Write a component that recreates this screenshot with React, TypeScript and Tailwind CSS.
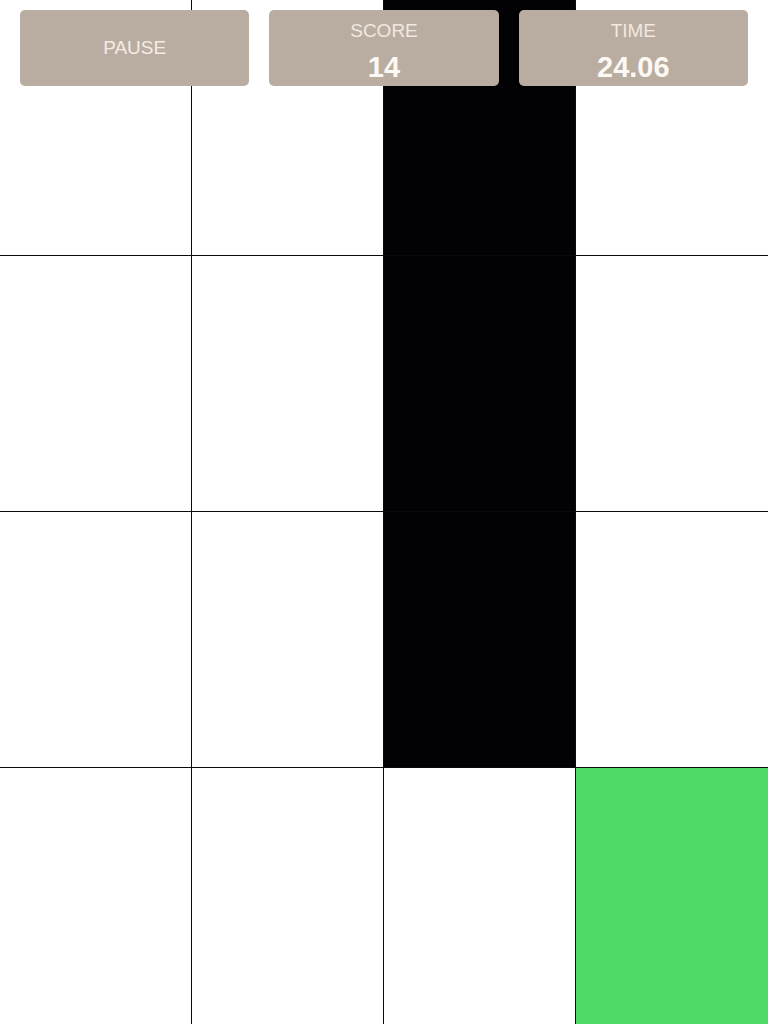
import React from 'react';

// 0 = white, 1 = black tile, 2 = tapped (green)
const rows: number[][] = [
    [0, 0, 1, 0],
    [0, 0, 1, 0],
    [0, 0, 1, 0],
    [0, 0, 0, 2],
];

function Tile({ kind, lastCol, lastRow }: { kind: number; lastCol: boolean; lastRow: boolean }) {
    const bg = kind === 1 ? 'bg-[#020103]' : kind === 2 ? 'bg-[#4fd966]' : 'bg-white';
    return (
        <div
            className={`h-[256px] border-[#0a0a0a] ${bg} ${lastCol ? '' : 'border-r'} ${lastRow ? '' : 'border-b'}`}
        />
    );
}

export default function App() {
    return (
        <div className="relative w-[768px] h-[1024px] overflow-hidden bg-white" style={{ fontFamily: '"Liberation Sans", Arial, sans-serif' }}>
            <div className="grid grid-cols-4">
                {rows.map((row, r) =>
                    row.map((kind, c) => (
                        <Tile key={`${r}-${c}`} kind={kind} lastCol={c === 3} lastRow={r === 3} />
                    ))
                )}
            </div>

            {/* HUD */}
            <div className="absolute top-[10px] left-0 right-0 flex gap-5 px-5">
                <button className="flex-1 h-[76px] rounded-[5px] bg-[#b9ada1] text-[#f4ece3] text-[19px] flex items-center justify-center">
                    PAUSE
                </button>
                <div className="flex-1 h-[76px] rounded-[5px] bg-[#b9ada1] flex flex-col items-center pt-[10px]">
                    <span className="text-[19px] leading-[22px] text-[#f1e8de]">SCORE</span>
                    <span className="text-[29px] leading-[34px] font-bold text-[#fcf8f3] mt-[8px]">14</span>
                </div>
                <div className="flex-1 h-[76px] rounded-[5px] bg-[#b9ada1] flex flex-col items-center pt-[10px]">
                    <span className="text-[19px] leading-[22px] text-[#f1e8de]">TIME</span>
                    <span className="text-[29px] leading-[34px] font-bold text-[#fcf8f3] mt-[8px]">24.06</span>
                </div>
            </div>
        </div>
    );
}
